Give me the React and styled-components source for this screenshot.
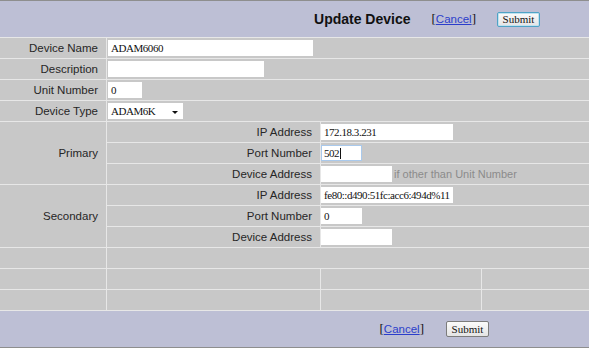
import React from 'react';
import styled, { createGlobalStyle } from 'styled-components';

const GlobalStyle = createGlobalStyle`
  html, body {
    margin: 0;
    padding: 0;
    background: #ffffff;
  }
  body {
    font-family: "Liberation Sans", Arial, sans-serif;
  }
`;

const Page = styled.div`
  width: 589px;
  height: 348px;
  border-top: 1px solid #8e8e8e;
  border-bottom: 1px solid #8e8e8e;
  box-sizing: border-box;
  display: flex;
  flex-direction: column;
  background: #bdbfd5;
`;

const Band = styled.div`
  height: 36px;
  flex: none;
  display: flex;
  align-items: center;
  justify-content: flex-end;
  gap: ${(p) => p.$gap || 21}px;
  padding-right: ${(p) => p.$right}px;
  background: #bdbfd5;
`;

const Title = styled.h1`
  margin: 0;
  font-size: 14px;
  font-weight: 700;
  color: #111;
  font-family: "Liberation Sans", Arial, sans-serif;
`;

const LinkGroup = styled.span`
  font-family: "Liberation Serif", "Times New Roman", serif;
  font-size: 13px;
  color: #111;
  line-height: 16px;
`;

const CancelLink = styled.a`
  font-family: "Liberation Sans", Arial, sans-serif;
  font-size: 11.5px;
  color: #2b3ecb;
  text-decoration: underline;
  cursor: pointer;
`;

const Button = styled.button`
  width: 43px;
  height: ${(p) => (p.$focused ? 15 : 16)}px;
  padding: 0;
  margin: 0;
  box-sizing: border-box;
  font-family: "Liberation Serif", "Times New Roman", serif;
  font-size: 11px;
  color: #111;
  border-radius: 2px;
  border: 1px solid ${(p) => (p.$focused ? '#4fa3c6' : '#7c7c7c')};
  box-shadow: ${(p) => (p.$focused ? 'inset 0 0 0 1px #bfe2f0' : 'none')};
  background: linear-gradient(#fbfbfb, #e4e4e4);
`;

const Grid = styled.div`
  flex: none;
  display: grid;
  grid-template-columns: 106px 213px 160px 107px;
  grid-template-rows: repeat(13, 20px);
  column-gap: 1px;
  row-gap: 1px;
  padding: 1px 0;
  background: #e7e7e7;
`;

const Cell = styled.div`
  background: #c8c8c8;
  display: flex;
  align-items: center;
  grid-column: ${(p) => p.$col || 'auto'};
  grid-row: ${(p) => p.$row || 'auto'};
  justify-content: ${(p) => (p.$label ? 'flex-end' : 'flex-start')};
  padding: ${(p) => (p.$label ? '0 8px 0 0' : `0 0 0 ${p.$inset || 0}px`)};
  font-size: 11.5px;
  color: #262626;
  gap: 2px;
`;

const Field = styled.div`
  position: relative;
  width: ${(p) => p.$w}px;
  height: 16px;
  box-sizing: border-box;
  overflow: hidden;
  white-space: nowrap;
  background: #ffffff;
  border: 1px solid ${(p) => (p.$focused ? '#a9c9ec' : '#ffffff')};
  padding-left: 2px;
  font-family: "Liberation Serif", "Times New Roman", serif;
  font-size: 11px;
  letter-spacing: -0.45px;
  line-height: 14px;
  color: #111;
  display: flex;
  align-items: center;
`;

const Caret = styled.span`
  display: inline-block;
  width: 1px;
  height: 11px;
  margin-left: 1px;
  background: #111;
`;

const Arrow = styled.span`
  position: absolute;
  right: 4px;
  top: 7px;
  width: 0;
  height: 0;
  border-left: 3px solid transparent;
  border-right: 3px solid transparent;
  border-top: 3px solid #111;
`;

const Hint = styled.span`
  font-size: 11px;
  color: #8b8b8b;
`;

const topRows = [
  { label: 'Device Name', value: 'ADAM6060', w: 205 },
  { label: 'Description', value: '', w: 156 },
  { label: 'Unit Number', value: '0', w: 34 },
];

const groups = [
  {
    name: 'Primary',
    start: 5,
    rows: [
      { label: 'IP Address', value: '172.18.3.231', w: 132 },
      { label: 'Port Number', value: '502', w: 41, focused: true },
      { label: 'Device Address', value: '', w: 71, hint: 'if other than Unit Number' },
    ],
  },
  {
    name: 'Secondary',
    start: 8,
    rows: [
      { label: 'IP Address', value: 'fe80::d490:51fc:acc6:494d%11', w: 132 },
      { label: 'Port Number', value: '0', w: 41 },
      { label: 'Device Address', value: '', w: 71 },
    ],
  },
];

const Actions = ({ focused }) => (
  <>
    <LinkGroup>
      [<CancelLink>Cancel</CancelLink>]
    </LinkGroup>
    <Button $focused={focused}>Submit</Button>
  </>
);

export default function App() {
  return (
    <>
      <GlobalStyle />
      <Page>
        <Band $right={49} $gap={21}>
          <Title>Update Device</Title>
          <Actions focused />
        </Band>
        <Grid>
          {topRows.map((r, i) => (
            <React.Fragment key={r.label}>
              <Cell $label $col="1" $row={`${i + 1}`}>{r.label}</Cell>
              <Cell $col="2 / span 3" $row={`${i + 1}`} $inset={1}>
                <Field $w={r.w}>{r.value}</Field>
              </Cell>
            </React.Fragment>
          ))}
          <Cell $label $col="1" $row="4">Device Type</Cell>
          <Cell $col="2 / span 3" $row="4" $inset={1}>
            <Field $w={75}>
              ADAM6K
              <Arrow />
            </Field>
          </Cell>
          {groups.map((g) => (
            <React.Fragment key={g.name}>
              <Cell $label $col="1" $row={`${g.start} / span 3`}>{g.name}</Cell>
              {g.rows.map((r, i) => (
                <React.Fragment key={r.label}>
                  <Cell $label $col="2" $row={`${g.start + i}`}>{r.label}</Cell>
                  <Cell $col="3 / span 2" $row={`${g.start + i}`}>
                    <Field $w={r.w} $focused={r.focused}>
                      {r.value}
                      {r.focused && <Caret />}
                    </Field>
                    {r.hint && <Hint>{r.hint}</Hint>}
                  </Cell>
                </React.Fragment>
              ))}
            </React.Fragment>
          ))}
          <Cell $col="1" $row="11" />
          <Cell $col="2 / span 3" $row="11" />
          {[12, 13].map((row) =>
            [1, 2, 3, 4].map((col) => <Cell key={`${row}-${col}`} $col={`${col}`} $row={`${row}`} />)
          )}
        </Grid>
        <Band $right={100} $gap={22}>
          <Actions />
        </Band>
      </Page>
    </>
  );
}
